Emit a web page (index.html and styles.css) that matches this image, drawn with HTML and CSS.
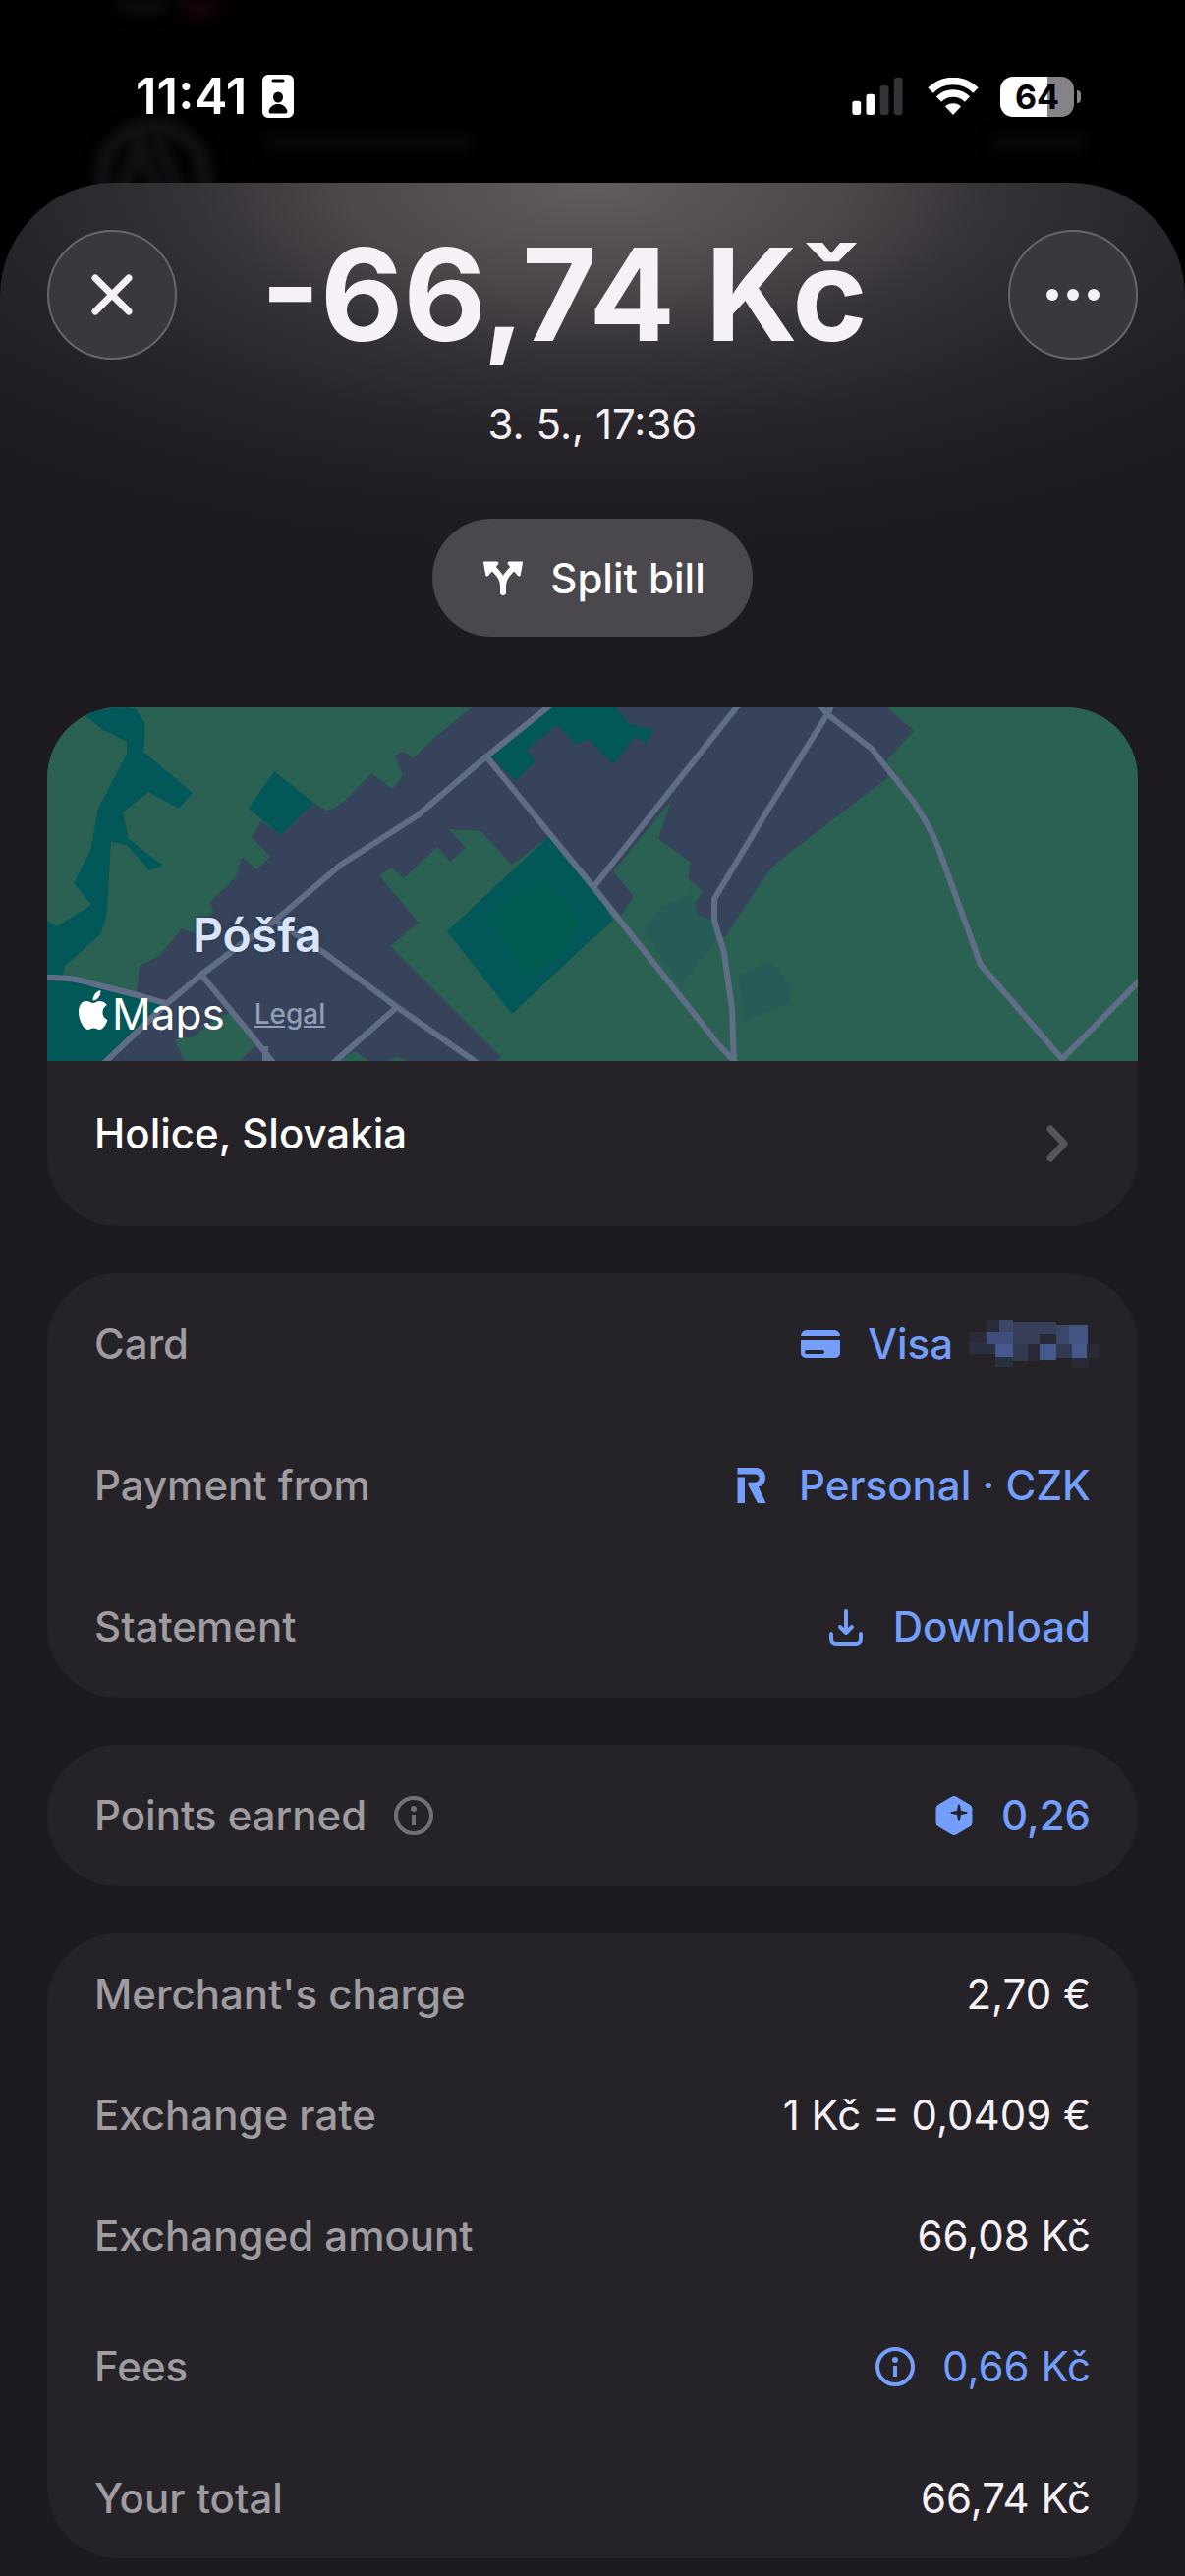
FILE: index.html
```html
<!DOCTYPE html>
<html lang="en">
<head>
<meta charset="utf-8">
<meta name="viewport" content="width=device-width, initial-scale=1">
<title>Transaction</title>
<link rel="stylesheet" href="styles.css">
</head>
<body>

<!-- Dimmed screen behind the sheet -->
<svg class="backdrop" viewBox="0 0 1206 216" preserveAspectRatio="xMidYMin slice" aria-hidden="true">
  <ellipse cx="145" cy="2" rx="30" ry="14" fill="#0c0c0e"/>
  <ellipse cx="203" cy="4" rx="22" ry="16" fill="#14030b"/>
  <circle cx="156" cy="180" r="52" fill="none" stroke="#121115" stroke-width="16"/>
  <path d="M116 214l26-66 26 66M158 140l34 74" fill="none" stroke="#121115" stroke-width="14"/>
  <rect x="270" y="136" width="210" height="20" fill="#070609"/>
  <rect x="1010" y="136" width="96" height="20" fill="#070609"/>
</svg>

<div class="statusbar">
  <div class="status-left">
    <span class="clock">11:41</span>
    <svg class="badge" viewBox="0 0 32 44">
      <path fill="#fff" fill-rule="evenodd" d="M6 0h20a6 6 0 0 1 6 6v32a6 6 0 0 1-6 6H6a6 6 0 0 1-6-6V6a6 6 0 0 1 6-6zM11 4.500a1.500 1.500 0 0 0 0 3h10a1.500 1.500 0 0 0 0-3zM16 17.500a5 5.500 0 1 0 0 11 5 5.500 0 0 0 0-11zM6.500 37.500a2 2 0 0 0 2 2h15a2 2 0 0 0 2-2c-1-5-5-7.500-9.500-7.500s-8.500 2.500-9.500 7.500z"/>
    </svg>
  </div>
  <div class="status-right">
    <svg class="signal" viewBox="0 0 58 43">
      <rect x="0" y="27" width="10" height="16" rx="3" fill="#fff"/>
      <rect x="16" y="19" width="10" height="24" rx="3" fill="#fff"/>
      <rect x="32" y="9" width="10" height="34" rx="3" fill="#353338"/>
      <rect x="48" y="0" width="10" height="43" rx="3" fill="#353338"/>
    </svg>
    <svg class="wifi" viewBox="0 0 52 38">
      <path d="M3 13a32.500 32.500 0 0 1 46 0" fill="none" stroke="#fff" stroke-width="7.500"/>
      <path d="M11.500 22a20.500 20.500 0 0 1 29 0" fill="none" stroke="#fff" stroke-width="7.500"/>
      <path d="M26 38l-8-8.500a11.500 11.500 0 0 1 16 0z" fill="#fff"/>
    </svg>
    <div class="battery"><span>64</span></div>
  </div>
</div>

<main class="sheet">
  <header class="header">
    <button class="round-btn" aria-label="Close">
      <svg viewBox="0 0 48 48"><path d="M7 7l34 34M41 7L7 41" stroke="#f5f1f7" stroke-width="7" stroke-linecap="round"/></svg>
    </button>
    <h1>-66,74 Kč</h1>
    <button class="round-btn" aria-label="More">
      <svg class="dots" viewBox="0 0 56 48"><g fill="#f5f1f7"><circle cx="7" cy="24" r="6"/><circle cx="28" cy="24" r="6"/><circle cx="49" cy="24" r="6"/></g></svg>
    </button>
  </header>
  <p class="date">3. 5., 17:36</p>
  <button class="split-btn">
    <svg class="icon" viewBox="0 0 48 48">
      <path d="M24 39V32C24 24 19 20 12 12M24 32c0-8 5-12 12-20" fill="none" stroke="#fff" stroke-width="6" stroke-linecap="round"/>
      <path d="M5 7.500h12.500c2 0 2.500 2 1.200 3.200l-9.500 11c-1.200 1.300-2.800 1-3-.7L4 9c-.1-1 .3-1.500 1-1.500zM43 7.500H30.500c-2 0-2.500 2-1.200 3.200l9.500 11c1.200 1.300 2.800 1 3-.7L44 9c.1-1-.3-1.500-1-1.500z" fill="#fff"/>
    </svg>
    Split bill
  </button>

  <section class="card">
    <div class="map">
      <svg class="map-art" viewBox="0 0 1110 360" preserveAspectRatio="xMidYMid slice" aria-hidden="true">
        <rect width="1110" height="360" fill="#2b6152"/>
        <!-- built-up area -->
        <path fill="#36435b" d="M432 0L399 27 372 52Q362 40 354 50L362 70 351 83 330 67 308 90Q294 104 284 105L271 97 238 130 218 116 208 132 227 152 213 165 198 153 192 173 166 198 169 208 151 230 137 225 114 253 94 263 91 290 120 301 60 360H456L462 356 349 243 378 219 338 171 351 163 363 174 397 142 410 157 426 143 409 124 441 126 473 160 510 132 556 183 584 212 597 192 576 167 635 95 622 134 655 158 652 174 667 187 659 200 663 213 680 217 689 235 730 173Q736 164 744 157L779 130 855 72V53L882 24 855 0z"/>
        <!-- woods -->
        <g fill="#025858">
          <path d="M38 8Q58 0 81 0L90 2 99 15 100 23 98 45 148 87 134 103 103 86 77 107 83 134 118 161 104 166 81 140 65 137 61 207Q58 224 53 232L18 263 16 273H0V217L10 223 45 201 27 179 44 145 52 103 81 47V35L57 23z"/>
          <path d="M0 278L33 280 92 292 120 301 60 360H0z"/>
          <path d="M231 65L271 97 238 130 205 103z"/>
          <path d="M510 132L556 183 576 217 552 238 473 312 407 228z"/>
          <path d="M510 0L452 50 477 75 497 55 488 43 519 18 539 38 551 32 576 58 598 30 609 36 618 23 593 17 578 0z"/>
        </g>
        <path fill="#015a4e" d="M504 175Q522 187 543 220 520 262 484 273 470 235 445 217 470 190 504 175z"/>
        <path fill="#2b6152" d="M129 338L149 335 170 318 188 310 213 343 197 360H140zM295 360L314 350 327 360zM345 360L356 356 369 360z"/>
        <path fill="#265c57" d="M607 228L626 202 656 190 663 212 678 217 680 240 644 283zM704 273L737 258 757 283V300L709 320z"/>
        <!-- roads -->
        <g fill="none" stroke="#5f6d86" stroke-width="6" stroke-linejoin="round">
          <path d="M513 -3L447 50 377 110 299 160 232 217 199 240 157 272 120 303 57 363"/>
          <path d="M447 50L556 183 683 343 702 363M556 183L704 -3"/>
          <path d="M799 -3L794 7 730 110 679 195V217L689 250 697 307 699 363"/>
          <path d="M786 -3L794 7 839 42 881 95Q898 120 907 143L950 262 1033 358 1113 277"/>
          <path d="M0 275Q25 274 45 281L92 293 120 301"/>
          <path d="M157 272L213 340 231 363M222 363V345"/>
          <path d="M232 217L282 250 356 305 439 363M356 305L290 363"/>
        </g>
      </svg>
      <span class="place">Póšfa</span>
      <div class="map-credit">
        <span class="maps-logo">
          <svg viewBox="0 0 30 42"><path fill="#fff" d="M15 13c-2.500 0-4-2-7.500-2C3 11 0 15.500 0 22c0 8 5 18 9.500 18 2.300 0 3.200-1.400 5.900-1.400S19 40 21.300 40C25 40 28 34.500 29.500 30c-3.500-1.500-5-4-5-7.500 0-3.200 1.600-5.800 4.300-7.400C27 12.500 24.500 11 21.500 11c-3 0-4.600 2-6.500 2zM14.500 10.500c0-5 3.500-9.500 7.800-10.500.7 5.500-3 10.500-7.800 10.500z"/></svg>
          Maps
        </span>
        <a class="legal" href="#">Legal</a>
      </div>
    </div>
    <a class="location" href="#">
      Holice, Slovakia
      <svg class="chevron" viewBox="0 0 24 40"><path d="M5 5l14 15L5 35" fill="none" stroke="#57555a" stroke-width="7" stroke-linecap="round" stroke-linejoin="round"/></svg>
    </a>
  </section>

  <section class="card">
    <div class="row">
      <span class="label">Card</span>
      <a class="value" href="#">
        <svg class="icon" viewBox="0 0 48 48"><path fill="#749efb" fill-rule="evenodd" d="M4 16a6 6 0 0 1 6-6h28a6 6 0 0 1 6 6zM4 20h40v13a5 5 0 0 1-5 5H9a5 5 0 0 1-5-5zM10 30a2 2 0 0 0 0 4h16a2 2 0 0 0 0-4z"/></svg>
        <span>Visa</span>
        <!-- masked card number -->
        <svg class="mask" viewBox="0 0 124 48" aria-hidden="true">
          <g shape-rendering="crispEdges">
            <path fill="#2b2b37" d="M0 12h18v10H0zM18 0h13v12H18z"/>
            <path fill="#2b3040" d="M0 22h27v12H0zM27 37h18v10H27z"/>
            <path fill="#3a4768" d="M31 0h14v12H31zM89 5h13v19H89z"/>
            <path fill="#374058" d="M45 2h44v22H45z"/>
            <path fill="#3f4f7d" d="M18 12h27v12H18z"/>
            <path fill="#46598c" d="M27 24h18v13H27zM72 24h17v16H72zM105 24h15v14h-15z"/>
            <path fill="#313a50" d="M45 24h15v17H45zM89 24h16v14H89z"/>
            <path fill="#2a2a36" d="M60 24h12v17H60zM72 14h17v10H72zM105 38h17v10h-17zM120 24h13v14h-13z"/>
            <path fill="#435485" d="M102 5h19v19h-19z"/>
          </g>
        </svg>
      </a>
    </div>
    <div class="row">
      <span class="label">Payment from</span>
      <a class="value" href="#">
        <svg class="icon" viewBox="0 0 48 48"><g fill="#749efb"><path d="M9.500 15.500H17V42H9.500zM9.500 6H28c6 0 10 4.300 10 10 0 4.700-2.800 8.500-7 9.600L38.500 42H30L20.500 24v-3.200H27c3 0 4.500-1.700 4.500-4.200S30 12.500 27 12.500H9.500z"/></g></svg>
        <span>Personal · CZK</span>
      </a>
    </div>
    <div class="row">
      <span class="label">Statement</span>
      <a class="value" href="#">
        <svg class="icon" viewBox="0 0 48 48"><path d="M24 8v21M18 24l6 6 6-6M9 31v5a5 5 0 0 0 5 5h20a5 5 0 0 0 5-5v-5" fill="none" stroke="#749efb" stroke-width="4" stroke-linecap="round" stroke-linejoin="round"/></svg>
        <span>Download</span>
      </a>
    </div>
  </section>

  <section class="card">
    <div class="row">
      <span class="label">Points earned
        <svg class="icon" viewBox="0 0 48 48"><circle cx="24" cy="24" r="18" fill="none" stroke="#727075" stroke-width="4"/><path d="M24 23v11" stroke="#727075" stroke-width="4"/><circle cx="24" cy="17" r="3" fill="#727075"/></svg>
      </span>
      <a class="value" href="#">
        <svg class="icon" viewBox="0 0 48 48"><path fill="#749efb" fill-rule="evenodd" d="M21.500 4.700a5 5 0 0 1 5 0l13.500 8a5 5 0 0 1 2.500 4.300v14a5 5 0 0 1-2.500 4.300l-13.500 8a5 5 0 0 1-5 0l-13.500-8A5 5 0 0 1 5.500 31V17A5 5 0 0 1 8 12.700zM28 13.500l-1 5.500-5.500 1a1 1 0 0 0 0 2l5.500 1 1 5.500a1 1 0 0 0 2 0l1-5.500 5.500-1a1 1 0 0 0 0-2l-5.500-1-1-5.500a1 1 0 0 0-2 0z"/></svg>
        <span>0,26</span>
      </a>
    </div>
  </section>

  <section class="card">
    <div class="row compact">
      <span class="label">Merchant's charge</span>
      <span class="amount">2,70 €</span>
    </div>
    <div class="row compact">
      <span class="label">Exchange rate</span>
      <span class="amount">1 Kč = 0,0409 €</span>
    </div>
    <div class="row compact">
      <span class="label">Exchanged amount</span>
      <span class="amount">66,08 Kč</span>
    </div>
    <div class="row">
      <span class="label">Fees</span>
      <a class="value fee" href="#">
        <svg class="icon" viewBox="0 0 48 48"><circle cx="24" cy="24" r="18" fill="none" stroke="#749efb" stroke-width="4"/><path d="M24 23v11" stroke="#749efb" stroke-width="4"/><circle cx="24" cy="17" r="3" fill="#749efb"/></svg>
        <span>0,66 Kč</span>
      </a>
    </div>
    <div class="row compact">
      <span class="label">Your total</span>
      <span class="amount">66,74 Kč</span>
    </div>
  </section>
</main>

</body>
</html>
```
FILE: styles.css
```css
* {
  box-sizing: border-box;
}

body {
  margin: 0;
  min-height: 100vh;
  display: flex;
  flex-direction: column;
  position: relative;
  background-color: #010003;
  color: #f5f1f7;
  font-family: Inter, "Liberation Sans", sans-serif;
  font-size: 42px;
  line-height: 60px;
}

a {
  text-decoration: none;
}

button {
  border: none;
  color: inherit;
  font-family: inherit;
  cursor: pointer;
}

.backdrop {
  position: absolute;
  top: 0;
  left: 0;
  width: 100%;
  height: 216px;
  filter: blur(6px);
}

/* Status bar */
.statusbar {
  position: relative;
  height: 186px;
  padding: 10px 113px 0 138px;
  display: flex;
  align-items: center;
  justify-content: space-between;
  color: #fff;
}

.status-left {
  display: flex;
  align-items: center;
  gap: 16px;
}

.clock {
  font-size: 51px;
  font-weight: 600;
}

.badge {
  width: 32px;
  height: 44px;
}

.status-right {
  display: flex;
  align-items: center;
  gap: 22px;
}

.signal {
  width: 58px;
  height: 38px;
}

.wifi {
  width: 52px;
  height: 38px;
}

.battery {
  position: relative;
  width: 75px;
  height: 41px;
  border-radius: 13px;
  background: linear-gradient(to right, #fff 64%, #858388 64%);
  color: #010003;
  font-size: 34px;
  font-weight: 700;
  line-height: 41px;
  text-align: center;
}

.battery::after {
  content: "";
  position: absolute;
  top: 14px;
  right: -7px;
  width: 4px;
  height: 13px;
  border-radius: 0 4px 4px 0;
  background-color: #858388;
}

/* Sheet */
.sheet {
  position: relative;
  flex: 1;
  display: flex;
  flex-direction: column;
  gap: 48px;
  padding: 48px 48px 18px;
  border-radius: 116px 116px 0 0;
  background: radial-gradient(ellipse 900px 380px at 50% 0, #625c60 0%, #4c474b 28%, #363338 45%, #28262a 65%, #201e22 84%, #1d1b1f 100%) #1d1b1f;
}

.header {
  display: flex;
  align-items: center;
  justify-content: space-between;
  height: 132px;
}

.header h1 {
  margin: 0;
  padding-right: 58px;
  font-size: 130px;
  font-weight: 700;
  line-height: 132px;
  white-space: nowrap;
}

.round-btn {
  width: 132px;
  height: 132px;
  padding: 0;
  display: flex;
  align-items: center;
  justify-content: center;
  border: 2px solid #69666b;
  border-radius: 50%;
  background-color: #3b383d;
}

.round-btn svg {
  width: 48px;
  height: 48px;
}

.round-btn .dots {
  width: 56px;
}

.date {
  margin: -12px 0 18px;
  text-align: center;
}

.split-btn {
  align-self: center;
  display: flex;
  align-items: center;
  gap: 24px;
  height: 120px;
  margin-bottom: 24px;
  padding: 0 48px;
  border-radius: 60px;
  background-color: #4a484c;
  color: #fff;
  font-size: 42px;
  font-weight: 500;
}

.icon {
  flex: none;
  width: 48px;
  height: 48px;
}

/* Cards */
.card {
  overflow: hidden;
  border-radius: 72px;
  background-color: #252328;
}

.map {
  position: relative;
  height: 360px;
  padding: 0 32px 18px;
  display: flex;
  align-items: flex-end;
}

.map-art {
  position: absolute;
  top: 0;
  left: 0;
  width: 100%;
  height: 100%;
}

.place {
  position: absolute;
  left: 148px;
  top: 202px;
  color: #dae4f8;
  font-size: 48px;
  font-weight: 600;
  text-shadow: 0 0 4px #2a3650;
}

.map-credit {
  position: relative;
  display: flex;
  align-items: center;
  gap: 30px;
}

.maps-logo {
  display: flex;
  align-items: center;
  gap: 4px;
  color: #fff;
  font-size: 44px;
}

.maps-logo svg {
  width: 30px;
  height: 42px;
  margin-bottom: 6px;
}

.legal {
  color: #929eb6;
  font-size: 28px;
  font-weight: 500;
  text-decoration: underline;
}

.location {
  display: flex;
  justify-content: space-between;
  padding: 44px 70px 64px 48px;
  color: #fff;
  font-weight: 500;
}

.chevron {
  width: 24px;
  height: 40px;
  margin-top: 20px;
}

.row {
  display: flex;
  align-items: center;
  justify-content: space-between;
  height: 144px;
  padding: 0 48px;
}

.row.compact {
  height: 123px;
}

.label {
  display: flex;
  align-items: center;
  gap: 24px;
  color: #9f9ca1;
  font-weight: 500;
}

.value {
  display: flex;
  align-items: center;
  gap: 24px;
  color: #749efb;
  font-weight: 500;
}

.fee {
  font-weight: 400;
}

.mask {
  width: 124px;
  height: 48px;
  margin-left: -8px;
  overflow: visible;
}
```
